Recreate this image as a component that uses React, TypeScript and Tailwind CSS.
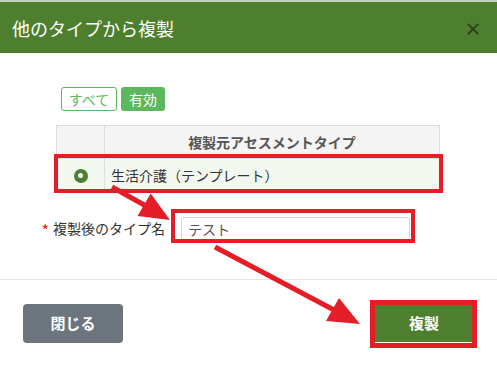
export default function App() {
  return (
    <div className="relative w-[497px] h-[368px] overflow-hidden bg-white font-['Noto_Sans_CJK_JP',sans-serif]">
      <div className="flex flex-col h-full border-t-2 border-[#c5cfbf]">
        <div className="flex items-center justify-between h-[51px] bg-[#4e7f2e] pl-3 pr-[15px]">
          <h2 className="text-[18px] leading-none text-white">他のタイプから複製</h2>
          <button className="text-[18px] font-bold leading-none text-[#2a3f1f]">×</button>
        </div>

        <div className="h-[226px] pt-[34px]">
          <div className="flex gap-[4px] ml-[61px]">
            <button className="w-[56px] h-[24px] rounded-[3px] border border-[#5cb85c] text-[#5cb85c] text-[14px] leading-none">
              すべて
            </button>
            <button className="w-[44px] h-[24px] rounded-[3px] bg-[#5cb85c] text-white text-[14px] leading-none">
              有効
            </button>
          </div>

          <table className="ml-[56px] mt-[14px] w-[384px] border-collapse text-[14px]">
            <thead>
              <tr className="h-[33px] bg-[#f4f4f4]">
                <th className="w-[48px] border border-[#dddddd]"></th>
                <th className="border border-[#dddddd] font-bold text-[#555555]">
                  複製元アセスメントタイプ
                </th>
              </tr>
            </thead>
            <tbody>
              <tr className="h-[34px] bg-[#f2f7f0]">
                <td className="border border-[#dddddd]">
                  <div className="flex justify-center">
                    <span className="flex items-center justify-center w-[14px] h-[14px] rounded-full bg-[#4e7f2e]">
                      <span className="w-[5px] h-[5px] rounded-full bg-white"></span>
                    </span>
                  </div>
                </td>
                <td className="border border-[#dddddd] pl-[6px] text-[#333333]">
                  生活介護（テンプレート）
                </td>
              </tr>
            </tbody>
          </table>

          <div className="flex items-center mt-[24px]">
            <label className="flex items-center justify-end w-[165px] text-[14px] text-[#333333]">
              <span className="text-[16px] leading-none text-[#e02020] mr-[4px] mt-[3px]">*</span>
              複製後のタイプ名
            </label>
            <input
              className="ml-[16px] w-[229px] h-[23px] rounded-[3px] border border-[#d4d4d4] px-[6px] text-[14px] text-[#555555] outline-none"
              defaultValue="テスト"
            />
          </div>
        </div>

        <div className="flex justify-between border-t border-[#e5e5e5] px-[23px] pt-[24px]">
          <button className="w-[100px] h-[39px] rounded-[4px] bg-[#6c757d] text-white text-[15px] font-bold">
            閉じる
          </button>
          <button className="w-[98px] h-[38px] mr-[1px] bg-[#4e7f2e] text-white text-[15px] font-bold">
            複製
          </button>
        </div>
      </div>

      <svg className="absolute inset-0 pointer-events-none" width="497" height="368" viewBox="0 0 497 368">
        <rect x="56" y="156" width="385" height="35" fill="none" stroke="#e41e26" strokeWidth="4" />
        <rect x="173" y="211" width="240" height="30" fill="none" stroke="#e41e26" strokeWidth="4" />
        <rect x="372.5" y="302.5" width="102" height="43" fill="none" stroke="#e41e26" strokeWidth="5" />
        <line x1="112" y1="187" x2="146" y2="206" stroke="#e41e26" strokeWidth="5" />
        <polygon points="170,220 137.5,216 150.7,193.6" fill="#e41e26" />
        <line x1="215" y1="247" x2="334" y2="310" stroke="#e41e26" strokeWidth="5" />
        <polygon points="360,324 326,321 339,298" fill="#e41e26" />
      </svg>
    </div>
  );
}
